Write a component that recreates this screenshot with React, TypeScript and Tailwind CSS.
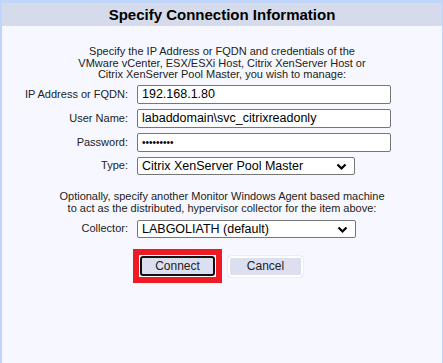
import React from "react";

function Chevron() {
  return (
    <svg width="11" height="8" viewBox="0 0 11 8" className="absolute right-[7px] top-[5px]">
      <path d="M1.5 1.5 L5.5 5.5 L9.5 1.5" fill="none" stroke="#000" strokeWidth="2.2" />
    </svg>
  );
}

function Select({ value, w }: { value: string; w: string }) {
  return (
    <div className={`relative h-[18px] ${w} border border-[#767676] rounded-[2px] bg-white text-[12.5px] leading-[16px] pl-[4px] text-black`}>
      {value}
      <Chevron />
    </div>
  );
}

function Input({ value, dots }: { value: string; dots?: boolean }) {
  return (
    <div className={`h-[19px] w-[254px] border border-[#767676] rounded-[2px] bg-white pl-[4px] text-black ${dots ? "text-[10px] leading-[17px]" : "text-[12.5px] leading-[17px]"}`}>
      {value}
    </div>
  );
}

export default function App() {
  return (
    <div
      className="w-[443px] h-[363px] border-t-[3px] border-l-2 border-r border-[#bfd5fb] bg-[#f7f8ff] text-[#222]"
      style={{ fontFamily: '"Liberation Sans", Arial, sans-serif' }}
    >
      <div className="h-[23px] pt-[1px] bg-[#d5dbea] flex items-center justify-center text-[15px] font-bold text-black">
        Specify Connection Information
      </div>
      <div className="mt-[20px] text-center text-[11px] leading-[11.5px] text-[#222]">
        Specify the IP Address or FQDN and credentials of the
        <br />
        VMware vCenter, ESX/ESXi Host, Citrix XenServer Host or
        <br />
        Citrix XenServer Pool Master, you wish to manage:
      </div>
      <div className="mt-[4px] grid grid-cols-[126px_auto] gap-x-[9px] gap-y-[5px] items-center text-[11px] text-[#222]">
        <div className="text-right">IP Address or FQDN:</div>
        <Input value="192.168.1.80" />
        <div className="text-right">User Name:</div>
        <Input value="labaddomain\svc_citrixreadonly" />
        <div className="text-right">Password:</div>
        <Input value="•••••••••" dots />
        <div className="text-right">Type:</div>
        <Select value="Citrix XenServer Pool Master" w="w-[218px]" />
      </div>
      <div className="mt-[15px] text-center text-[11px] leading-[12px] text-[#222]">
        Optionally, specify another Monitor Windows Agent based machine
        <br />
        to act as the distributed, hypervisor collector for the item above:
      </div>
      <div className="mt-[6px] grid grid-cols-[126px_auto] gap-x-[9px] items-center text-[11px] text-[#222]">
        <div className="text-right">Collector:</div>
        <Select value="LABGOLIATH (default)" w="w-[219px]" />
      </div>
      <div className="mt-[11px] flex items-start">
        <div className="ml-[131px] border-[6px] border-[#ed1c24] bg-white p-[1px]">
          <div className="w-[75px] h-[20px] border-2 border-[#111] rounded-[3px] bg-[#dcdff0] flex items-center justify-center text-[12px] text-[#222]">
            Connect
          </div>
        </div>
        <div className="ml-[6px] mt-[7px] w-[75px] h-[21px] border-2 border-white rounded-[3px] shadow-[0_0_1px_#999] bg-[#dcdff0] flex items-center justify-center text-[12px] text-[#222]">
          Cancel
        </div>
      </div>
    </div>
  );
}
